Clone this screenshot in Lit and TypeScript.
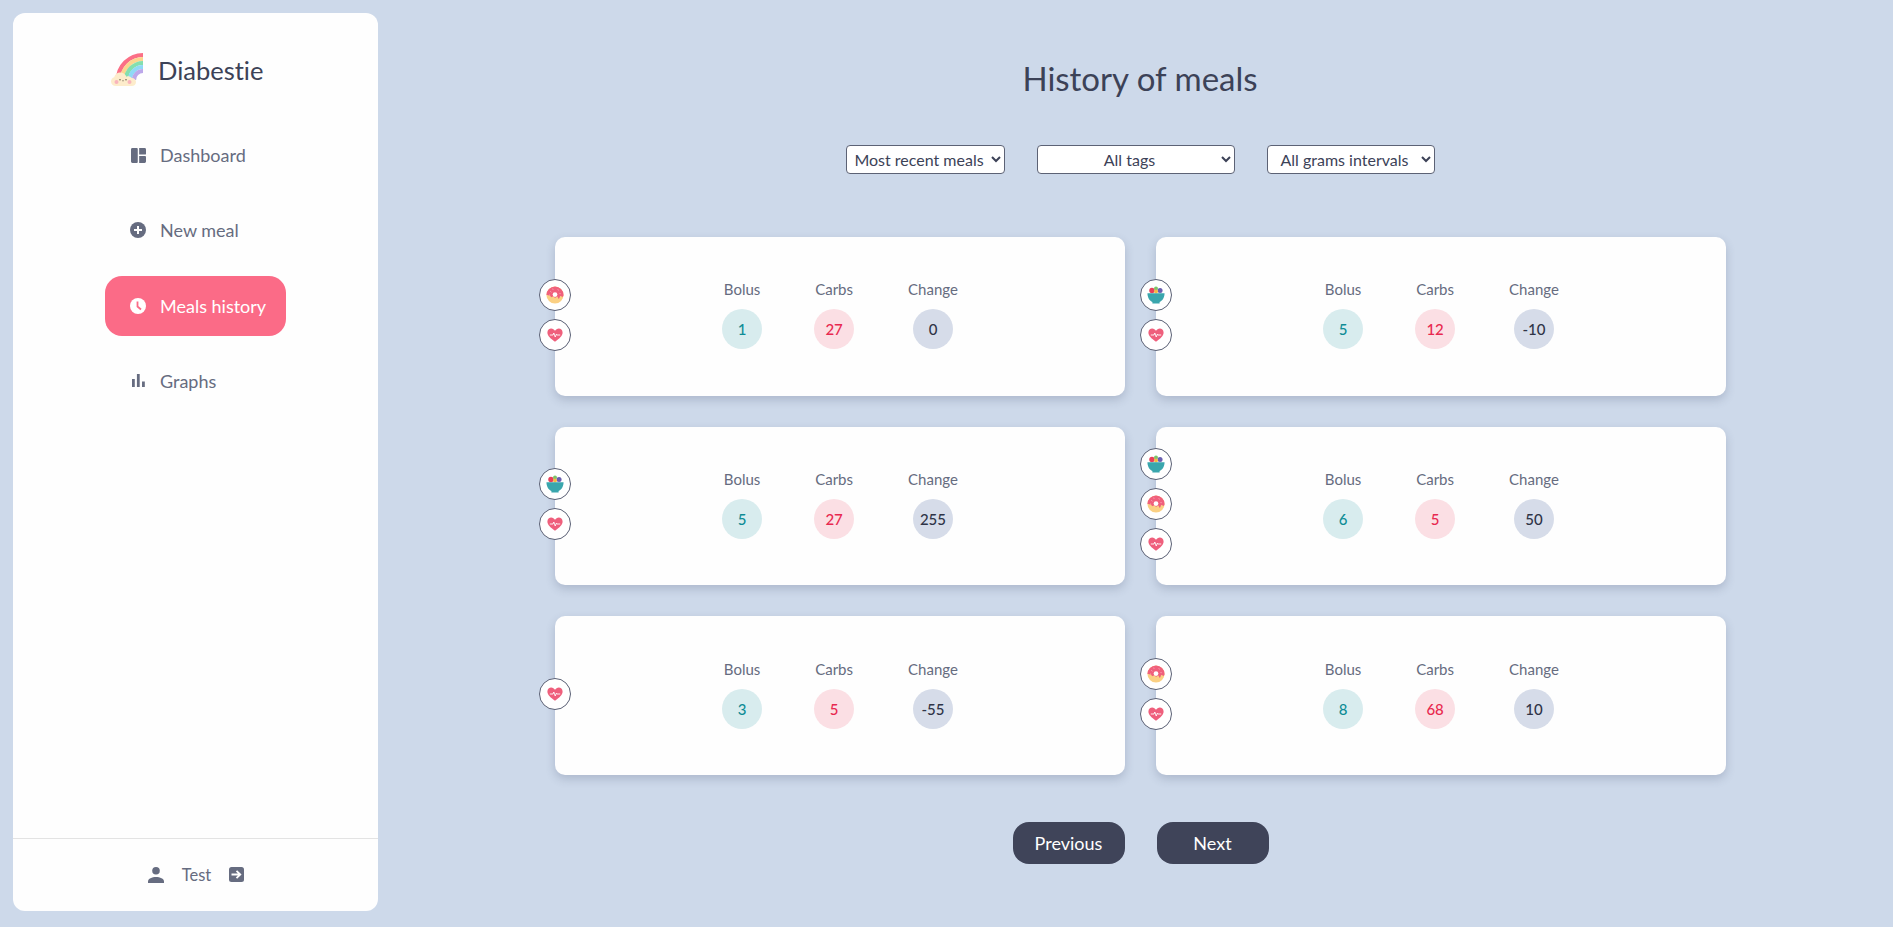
import { LitElement, html, css, svg } from "lit";
import { customElement } from "lit/decorators.js";

type Tag = "donut" | "bowl" | "heart";
interface Meal { bolus: number; carbs: number; change: number; tags: Tag[] }

const meals: Meal[] = [
  { bolus: 1, carbs: 27, change: 0, tags: ["donut", "heart"] },
  { bolus: 5, carbs: 12, change: -10, tags: ["bowl", "heart"] },
  { bolus: 5, carbs: 27, change: 255, tags: ["bowl", "heart"] },
  { bolus: 6, carbs: 5, change: 50, tags: ["bowl", "donut", "heart"] },
  { bolus: 3, carbs: 5, change: -55, tags: ["heart"] },
  { bolus: 8, carbs: 68, change: 10, tags: ["donut", "heart"] },
];

const tagIcons: Record<Tag, unknown> = {
  donut: svg`<svg viewBox="0 0 20 20" width="18" height="18">
    <circle cx="10" cy="10" r="9.500" fill="#fbd083"/>
    <path d="M.5 10a9.500 9.500 0 0 1 19 0c0 1.500-1 2.500-1.800 2-.7-.4-1-1.200-1.800-.8-.8.4-.6 3-1.700 3-1 0-.8-2.500-1.800-2.500-1 0-1.200 1.600-2.400 1.400-1-.2-.8-1.900-1.900-1.800-1 .1-1.200 1.500-2.300 1-.9-.4-.7-1.700-1.500-1.700-.6 0-1.800.4-1.800-.6z" fill="#f0607c"/>
    <circle cx="10" cy="9.500" r="2.600" fill="#fff"/>
    <path d="M5 6l1 1M13 4l1 .6M15.500 8l.3 1M7.500 3l.3 1M3.500 9.500l.6.6" stroke="#ffd9e0" stroke-width=".8" fill="none"/>
  </svg>`,
  bowl: svg`<svg viewBox="0 0 20 20" width="18" height="18">
    <circle cx="5.500" cy="5" r="3" fill="#e8405a"/>
    <circle cx="10" cy="2.800" r="2.200" fill="#7cc46a"/>
    <circle cx="14.500" cy="5" r="2.800" fill="#6a5fb0"/>
    <circle cx="10" cy="6" r="2.200" fill="#f4b942"/>
    <path d="M.5 8h19c0 5-2.600 8.600-5.500 9.700v1.800H6v-1.800C3.100 16.600.5 13 .5 8z" fill="#3aa6ad"/>
  </svg>`,
  heart: svg`<svg viewBox="0 0 20 20" width="16" height="16">
    <path d="M10 18.500C4 14 .5 10.700 .5 6.800 .5 3.800 2.900 1.800 5.300 1.800 7.200 1.800 9 2.900 10 4.800c1-1.900 2.800-3 4.700-3 2.400 0 4.800 2 4.800 5 0 3.900-3.500 7.200-9.500 11.700z" fill="#ef5f7c"/>
    <path d="M3.500 10H7.500l1-2.500 1.800 5 1.400-3.500.6 1H16.500" fill="none" stroke="#fff" stroke-width="1.100" stroke-linejoin="round"/>
  </svg>`,
};

const logo = svg`<svg viewBox="0 0 36 36" width="36" height="36">
  <g fill="none" stroke-width="4.200">
    <path d="M33 3A25 25 0 0 0 8 28" stroke="#fb6f86"/>
    <path d="M33 7A21 21 0 0 0 12 28" stroke="#fbd68f"/>
    <path d="M33 11A17 17 0 0 0 16 28" stroke="#84dfae"/>
    <path d="M33 15A13 13 0 0 0 20 28" stroke="#8fd9f6"/>
    <path d="M33 19A9 9 0 0 0 24 28" stroke="#bca8ea"/>
  </g>
  <path d="M6 34c-3 0-5-2-5-4.500 0-2 1.300-3.700 3.200-4.200C5 22 8 20 11 20.500c2.800.4 4.600 2.200 5.400 4.300 1-.5 2-.6 3-.3 1.200.3 1.800.9 2.400 1.500 2.500-.1 4.200 1.700 4.200 4 0 2.400-1.900 4-4.200 4z" fill="#fdeccb"/>
  <circle cx="6.500" cy="30" r="2" fill="#f9b4bd"/>
  <circle cx="19.500" cy="30" r="2" fill="#f9b4bd"/>
  <circle cx="10" cy="27.800" r=".7" fill="#5a4a3a"/>
  <circle cx="16" cy="27.800" r=".7" fill="#5a4a3a"/>
  <path d="M12 28.500q1 1 2 0" stroke="#5a4a3a" stroke-width=".5" fill="none"/>
</svg>`;

const navIcons = {
  dashboard: svg`<svg viewBox="0 0 16 16" width="15" height="15"><path d="M1.500 0h4.700a1 1 0 0 1 1 1v14a1 1 0 0 1-1 1H1.500A1.500 1.500 0 0 1 0 14.500v-13A1.500 1.500 0 0 1 1.500 0zM8.700 0H14.500A1.500 1.500 0 0 1 16 1.500V6a1 1 0 0 1-1 1H8.700zM8.700 8.500H15a1 1 0 0 1 1 1v5a1.500 1.500 0 0 1-1.500 1.500H8.700z" fill="currentColor"/></svg>`,
  plus: svg`<svg viewBox="0 0 16 16" width="16" height="16"><circle cx="8" cy="8" r="8" fill="currentColor"/><path d="M8 4v8M4 8h8" stroke="#fff" stroke-width="2"/></svg>`,
  clock: svg`<svg viewBox="0 0 16 16" width="16" height="16"><circle cx="8" cy="8" r="8" fill="currentColor"/><path d="M7.500 3.500V8.500l3.500 3" stroke="#fb6b87" stroke-width="1.800" fill="none"/></svg>`,
  bars: svg`<svg viewBox="0 0 14 14" width="13" height="13"><path d="M0 5.500h3V14H0zM5.300 0h3v14h-3zM10.800 8h3v6h-3z" fill="currentColor"/></svg>`,
  user: svg`<svg viewBox="0 0 16 16" width="16" height="16"><circle cx="8" cy="3.800" r="3.800" fill="currentColor"/><path d="M0 16v-1.500C0 11.500 4 10 8 10s8 1.500 8 4.500V16z" fill="currentColor"/></svg>`,
  logout: svg`<svg viewBox="0 0 16 16" width="16" height="16"><rect width="15" height="15" rx="2.500" fill="currentColor"/><path d="M2.500 7.500h8M7.500 3.800l3.800 3.700-3.800 3.700" stroke="#fff" stroke-width="1.800" fill="none"/></svg>`,
};

const nav = [
  { label: "Dashboard", icon: navIcons.dashboard, active: false },
  { label: "New meal", icon: navIcons.plus, active: false },
  { label: "Meals history", icon: navIcons.clock, active: true },
  { label: "Graphs", icon: navIcons.bars, active: false },
];

@customElement("app-root")
export class AppRoot extends LitElement {
  static styles = css`
    :host {
      display: flex;
      box-sizing: border-box;
      height: 927px;
      padding: 13px 0 16px 13px;
      background: #cdd9ea;
      font-family: "Lato", "Open Sans", sans-serif;
      font-variant-ligatures: none;
      color: #3c4257;
      overflow: hidden;
    }
    .sidebar {
      width: 365px;
      flex: none;
      background: #fefefe;
      border-radius: 12px;
      display: flex;
      flex-direction: column;
    }
    .brand {
      display: flex;
      align-items: center;
      gap: 12px;
      margin: 38px 0 0 97px;
      height: 38px;
      font-size: 25.500px;
      color: #3c4257;
    }
    .nav {
      display: flex;
      flex-direction: column;
      gap: 15.300px;
      margin: 36px 0 0 92px;
      flex: 1;
    }
    .item {
      display: flex;
      align-items: center;
      width: 181px;
      height: 60px;
      box-sizing: border-box;
      padding-left: 25px;
      border-radius: 17px;
      font-size: 18px;
      color: #666c80;
    }
    .item.active { background: #fb6b87; color: #fff; }
    .icon { width: 16px; display: flex; justify-content: center; margin-right: 14px; }
    .foot {
      border-top: 1px solid #e3e3e3;
      height: 72px;
      display: flex;
      align-items: center;
      justify-content: center;
      font-size: 16.500px;
      color: #666c80;
      gap: 18px;
      padding-left: 2px;
    }
    .foot svg { display: block; }
    .main {
      flex: 1;
      margin-left: 9px;
      display: flex;
      flex-direction: column;
      align-items: center;
    }
    h1 {
      margin: 43px 0 0;
      height: 44px;
      line-height: 44px;
      font-size: 33px;
      font-weight: 400;
      color: #3c4257;
    }
    .filters { display: flex; gap: 32px; margin-top: 45px; }
    select {
      height: 29px;
      box-sizing: border-box;
      background: #fff;
      border: 1px solid #5c6275;
      border-radius: 4px;
      font: inherit;
      font-size: 16px;
      color: #3c4257;
      text-align: center;
      text-align-last: center;
      padding: 0 2px;
    }
    .s1 { width: 159px; }
    .s2 { width: 198px; }
    .s3 { width: 168px; }
    .grid {
      display: grid;
      grid-template-columns: 570px 570px;
      grid-auto-rows: 158.670px;
      gap: 31px;
      margin-top: 63px;
    }
    .card {
      position: relative;
      background: #fefefe;
      border-radius: 10px;
      box-shadow: 0 4px 10px rgba(60, 70, 100, .22);
      display: flex;
      justify-content: center;
      align-items: center;
      gap: 52px;
      padding: 0 0 3px 1px;
      box-sizing: border-box;
    }
    .tags {
      position: absolute;
      left: -16px;
      top: 0;
      bottom: 3px;
      display: flex;
      flex-direction: column;
      justify-content: center;
      gap: 8px;
    }
    .tag {
      width: 32px;
      height: 32px;
      box-sizing: border-box;
      border: 1.500px solid #5a6075;
      border-radius: 50%;
      background: #fff;
      display: flex;
      align-items: center;
      justify-content: center;
    }
    .stat {
      display: flex;
      flex-direction: column;
      align-items: center;
      gap: 11px;
      font-size: 15px;
      color: #666c80;
    }
    .stat:last-child { margin-left: 2px; }
    .num {
      width: 40px;
      height: 40px;
      border-radius: 50%;
      display: flex;
      align-items: center;
      justify-content: center;
      font-size: 15px;
      font-weight: 500;
    }
    .bolus { background: #d8ecee; color: #0e8c96; }
    .carbs { background: #fbdfe4; color: #e8294f; }
    .change { background: #d6dce9; color: #2f3447; }
    .pager { display: flex; gap: 32px; margin-top: 47px; padding-left: 1px; }
    button {
      width: 112px;
      height: 42px;
      border: 0;
      border-radius: 16px;
      background: #3f4459;
      color: #fff;
      font: inherit;
      font-size: 18px;
    }
  `;

  render() {
    return html`
      <aside class="sidebar">
        <div class="brand">${logo}<span>Diabestie</span></div>
        <nav class="nav">
          ${nav.map(n => html`<div class="item ${n.active ? "active" : ""}"><span class="icon">${n.icon}</span>${n.label}</div>`)}
        </nav>
        <div class="foot">${navIcons.user}<span>Test</span>${navIcons.logout}</div>
      </aside>
      <main class="main">
        <h1>History of meals</h1>
        <div class="filters">
          <select class="s1"><option>Most recent meals</option></select>
          <select class="s2"><option>All tags</option></select>
          <select class="s3"><option>All grams intervals</option></select>
        </div>
        <div class="grid">
          ${meals.map(m => html`
            <div class="card">
              <div class="tags">${m.tags.map(t => html`<div class="tag">${tagIcons[t]}</div>`)}</div>
              <div class="stat"><span>Bolus</span><span class="num bolus">${m.bolus}</span></div>
              <div class="stat"><span>Carbs</span><span class="num carbs">${m.carbs}</span></div>
              <div class="stat"><span>Change</span><span class="num change">${m.change}</span></div>
            </div>`)}
        </div>
        <div class="pager"><button>Previous</button><button>Next</button></div>
      </main>
    `;
  }
}
